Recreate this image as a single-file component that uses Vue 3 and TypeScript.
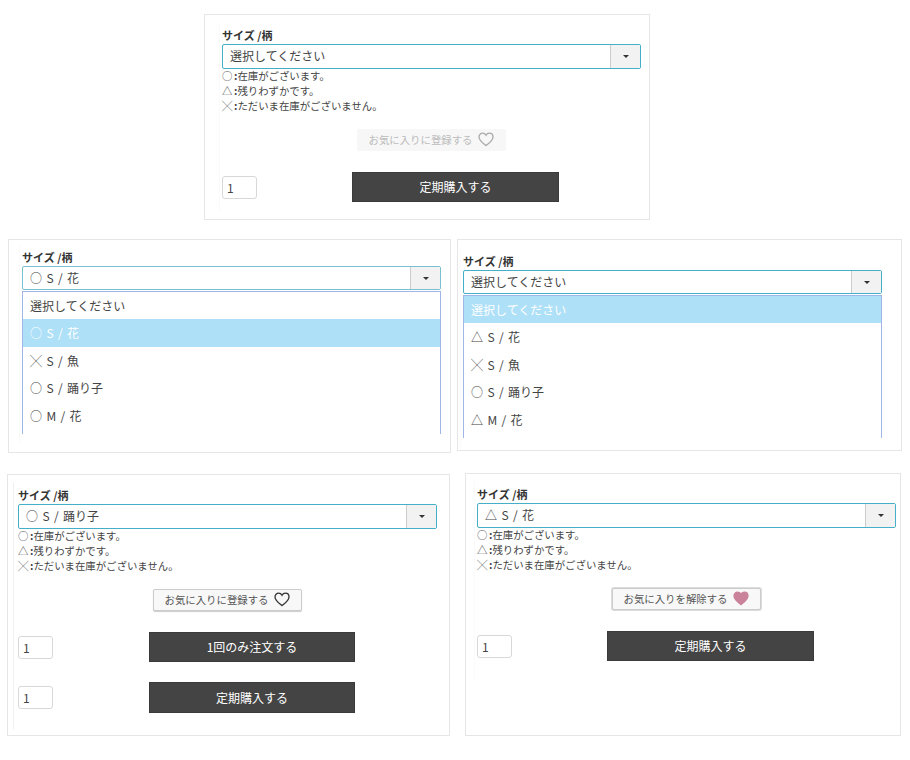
<template>
  <div class="page">
    <div v-for="(row, i) in rows" :key="i" class="row" :class="`row-${i + 1}`">
      <section v-for="p in row" :key="p.id" class="panel" :class="p.id">
        <div class="inner">
          <p class="label">サイズ /柄</p>
          <div class="select" :class="{ open: p.options }">
            <span class="value">{{ p.value }}</span>
            <span class="arrow"><i class="caret"></i></span>
          </div>

          <!-- 開いた状態のリスト -->
          <ul v-if="p.options" class="dropdown">
            <li
              v-for="(opt, n) in p.options"
              :key="n"
              :class="{ active: n === p.activeIndex }"
            >
              {{ opt }}
            </li>
          </ul>

          <template v-else>
            <div class="notes">
              <p v-for="note in notes" :key="note.mark">
                <span class="mark">{{ note.mark }}</span><b>:</b>{{ note.text }}
              </p>
            </div>
            <div class="fav-wrap">
              <button type="button" class="fav" :class="p.fav">
                <span>{{ p.fav === 'on' ? 'お気に入りを解除する' : 'お気に入りに登録する' }}</span>
                <svg width="16" height="15" viewBox="0 0 16 15">
                  <path
                    d="M8 13.6C5.2 11.3 1 8.4 1 4.9 1 2.7 2.7 1.2 4.6 1.2 6 1.2 7.3 2 8 3.3 8.7 2 10 1.2 11.4 1.2 13.3 1.2 15 2.7 15 4.9 15 8.4 10.8 11.3 8 13.6Z"
                  />
                </svg>
              </button>
            </div>
            <div v-for="label in p.buttons" :key="label" class="buy-row">
              <input class="qty" type="text" value="1" />
              <button type="button" class="buy">{{ label }}</button>
            </div>
          </template>
        </div>
      </section>
    </div>
  </div>
</template>

<script setup lang="ts">
interface Panel {
  id: string
  value: string
  options?: string[]
  activeIndex?: number
  fav?: 'disabled' | 'off' | 'on'
  buttons?: string[]
}

const notes = [
  { mark: '○', text: '在庫がございます。' },
  { mark: '△', text: '残りわずかです。' },
  { mark: '╳', text: 'ただいま在庫がございません。' }
]

const rows: Panel[][] = [
  [
    { id: 'p1', value: '選択してください', fav: 'disabled', buttons: ['定期購入する'] }
  ],
  [
    {
      id: 'p2',
      value: '○ S / 花',
      options: ['選択してください', '○ S / 花', '╳ S / 魚', '○ S / 踊り子', '○ M / 花'],
      activeIndex: 1
    },
    {
      id: 'p3',
      value: '選択してください',
      options: ['選択してください', '△ S / 花', '╳ S / 魚', '○ S / 踊り子', '△ M / 花'],
      activeIndex: 0
    }
  ],
  [
    { id: 'p4', value: '○ S / 踊り子', fav: 'off', buttons: ['1回のみ注文する', '定期購入する'] },
    { id: 'p5', value: '△ S / 花', fav: 'on', buttons: ['定期購入する'] }
  ]
]
</script>

<style>
body {
  background: #fff;
}
</style>

<style scoped>
.page {
  width: 910px;
  height: 760px;
  overflow: hidden;
  font-family: "Noto Sans CJK JP", "Noto Sans", sans-serif;
  color: #444;
  font-size: 12px;
}

.row {
  display: flex;
  align-items: flex-start;
}
.row-1 {
  padding: 14px 0 0 204px;
}
.row-2 {
  padding: 19px 0 0 8px;
  gap: 6px;
}
.row-3 {
  padding: 20px 0 0 7px;
  gap: 15px;
}

.panel {
  box-sizing: border-box;
  border: 1px solid #e6e6e6;
  background: #fff;
}
.p1 {
  width: 446px;
  height: 206px;
  padding: 8px 0 0 14px;
}
.p2 {
  width: 443px;
  height: 214px;
  padding: 5px 0 0 10px;
}
.p3 {
  width: 445px;
  height: 212px;
  padding: 9px 0 0 2px;
}
.p4 {
  width: 443px;
  height: 262px;
  margin-top: 1px;
  padding: 8px 0 0 5px;
}
.p5 {
  width: 436px;
  height: 263px;
  padding: 8px 0 0 8px;
}

.inner {
  width: 419px;
  padding: 0 0 10px 2px;
  border-left: 1px solid #fafafa;
}
.p4 .inner {
  padding-left: 4px;
  padding-bottom: 16px;
  border-left-color: #efefef;
}
.p5 .inner {
  padding-bottom: 17px;
}

.label {
  margin: 0;
  height: 21px;
  padding-top: 5px;
  box-sizing: border-box;
  font-size: 11px;
  line-height: 15px;
  font-weight: 700;
  color: #333;
}

.select {
  box-sizing: border-box;
  display: flex;
  width: 419px;
  height: 25px;
  border: 1px solid #45afca;
  border-radius: 2px;
  background: #fff;
}
.p2 .select {
  border-color: #78c0d0;
}
.select.open {
  height: 24px;
}
.value {
  flex: 1;
  padding-left: 7px;
  line-height: 22px;
  font-size: 12px;
  word-spacing: 1.7px;
}
.open .value {
  line-height: 21px;
}
.arrow {
  width: 29px;
  display: flex;
  align-items: center;
  justify-content: center;
  background: #f2f2f2;
  border-left: 1px solid #ccc;
}
.caret {
  width: 0;
  height: 0;
  border-left: 3px solid transparent;
  border-right: 3px solid transparent;
  border-top: 3px solid #333;
}

.dropdown {
  list-style: none;
  box-sizing: border-box;
  width: 419px;
  height: 143px;
  margin: 1px 0 0;
  padding: 0;
  overflow: hidden;
  border: 1px solid #9fb6e6;
  border-bottom: none;
}
.dropdown li {
  height: 27.4px;
  padding-left: 7px;
  line-height: 27px;
  font-size: 12px;
  word-spacing: 1.7px;
}
.dropdown li.active {
  background: #aee0f7;
  color: #fff;
}

.notes {
  margin-top: -1px;
  font-size: 10.4px;
  line-height: 15px;
  color: #444;
}
.notes p {
  margin: 0;
}
.mark {
  display: inline-block;
  width: 12px;
  color: #555;
}

.fav-wrap {
  display: flex;
  justify-content: center;
  margin-top: 16px;
}
.fav {
  box-sizing: border-box;
  display: flex;
  align-items: center;
  justify-content: center;
  gap: 6px;
  width: 149px;
  height: 22px;
  padding: 0 0 1px;
  font: inherit;
  font-size: 10.4px;
  color: #555;
  background: #f8f8f8;
  border: 1px solid #ccc;
  border-radius: 2px;
}
.fav svg {
  fill: none;
  stroke: #333;
  stroke-width: 1.3;
}
.fav.off {
  box-shadow: 0 1px 1px #ccc;
}
.fav.on {
  box-shadow: 0 0 0 1px #dcdcdc;
}
.fav.disabled {
  border-color: #f7f7f7;
  background: #f7f7f7;
  color: #bbb;
}
.fav.disabled svg {
  stroke: #aaa;
}
.fav.on svg {
  fill: #c9829a;
  stroke: #c9829a;
}

.buy-row {
  display: flex;
  align-items: center;
  margin-top: 21px;
}
.qty {
  box-sizing: border-box;
  width: 35px;
  height: 23px;
  padding: 0 4px;
  font: inherit;
  font-size: 12px;
  color: #444;
  border: 1px solid #d8d8d8;
  border-radius: 3px;
  outline: none;
}
.buy {
  box-sizing: border-box;
  width: 207px;
  height: 30px;
  margin-left: 95px;
  padding: 0 0 1px;
  font: inherit;
  font-size: 12px;
  color: #fff;
  background: #444;
  border: 1px solid #3a3a3a;
}
.p4 .buy {
  width: 206px;
  margin-left: 96px;
}
.p4 .buy-row:last-child {
  margin-top: 20px;
}
.p4 .buy-row:last-child .buy {
  height: 31px;
}
</style>
